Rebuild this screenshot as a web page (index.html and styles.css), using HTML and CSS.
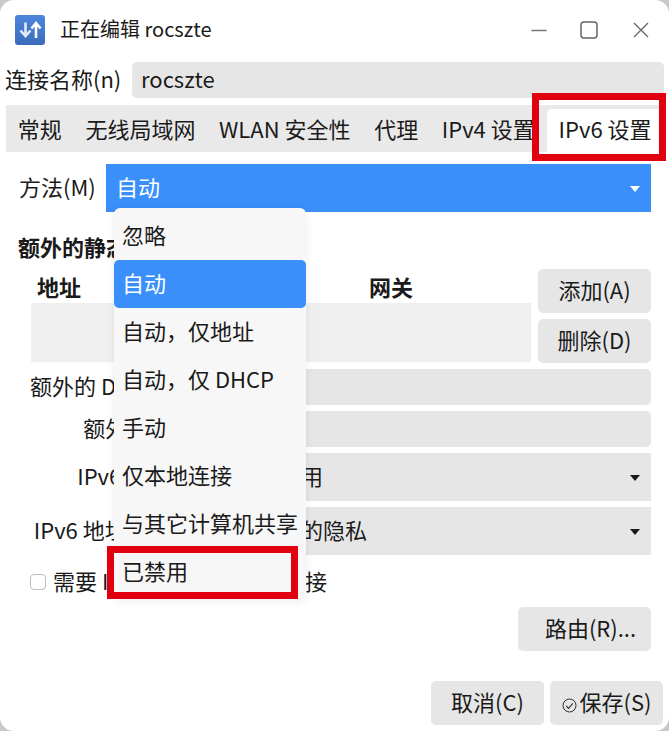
FILE: index.html
```html
<!DOCTYPE html>
<html lang="zh-CN">
<head>
<meta charset="utf-8">
<title>正在编辑 rocszte</title>
<link rel="stylesheet" href="styles.css">
</head>
<body>
<div class="window">
  <header class="titlebar">
    <svg class="app-icon" viewBox="0 0 30 30" width="30" height="30">
      <defs><linearGradient id="g" x1="0" y1="0" x2="0" y2="1"><stop offset="0" stop-color="#4c86dc"/><stop offset="1" stop-color="#3b6cbc"/></linearGradient></defs>
      <rect width="30" height="30" rx="3" fill="url(#g)"/>
      <path d="M10.5 7.5v13M5.5 15.5l5 5.5 5-5.5" fill="none" stroke="#e3ebf7" stroke-width="2.6"/>
      <path d="M21 23v-14M16.5 13.5L21 8l4.500 5.500" fill="none" stroke="#fff" stroke-width="2.6"/>
    </svg>
    <span class="title">正在编辑 rocszte</span>
    <div class="controls">
      <svg class="min-icon" width="16" height="16" viewBox="0 0 16 16"><path d="M0.500 8.500h15" stroke="#777" stroke-width="1.400"/></svg>
      <svg width="18" height="18" viewBox="0 0 18 18"><rect x="1" y="1" width="16" height="16" rx="3" fill="none" stroke="#666" stroke-width="1.500"/></svg>
      <svg width="16" height="16" viewBox="0 0 16 16"><path d="M1 1l14 14M15 1L1 15" stroke="#666" stroke-width="1.300" fill="none"/></svg>
    </div>
  </header>

  <div class="name-row">
    <label class="name-label">连接名称(n)</label>
    <div class="field name-field">rocszte</div>
  </div>

  <nav class="tabs">
    <span class="tab">常规</span>
    <span class="tab">无线局域网</span>
    <span class="tab">WLAN 安全性</span>
    <span class="tab">代理</span>
    <span class="tab">IPv4 设置</span>
    <span class="tab tab-active">IPv6 设置</span>
  </nav>

  <main class="panel">
    <div class="method-row">
      <label class="method-label">方法(M)</label>
      <div class="select select-active">自动<svg class="caret" width="10" height="6" viewBox="0 0 10 6"><path d="M0 0h10L5 6z" fill="#fff"/></svg></div>
    </div>

    <h2 class="section-title">额外的静态地址</h2>

    <div class="addresses">
      <div class="table">
        <div class="table-head"><b>地址</b><b>子网掩码</b><b>网关</b></div>
        <div class="table-body"></div>
      </div>
      <div class="side-buttons">
        <button class="btn">添加(A)</button>
        <button class="btn">删除(D)</button>
      </div>
    </div>

    <div class="form-row">
      <label class="form-label">额外的 DNS 服务器(V)</label>
      <div class="field grow"></div>
    </div>
    <div class="form-row">
      <label class="form-label">额外的搜索域(E)</label>
      <div class="field grow"></div>
    </div>
    <div class="form-row">
      <label class="form-label">IPv6 隐私扩展(P)</label>
      <div class="select grow">已禁用<svg class="caret" width="10" height="6" viewBox="0 0 10 6"><path d="M0 0h10L5 6z" fill="#1a1a1a"/></svg></div>
    </div>
    <div class="form-row">
      <label class="form-label">IPv6 地址生成模式(A)</label>
      <div class="select grow">稳定的隐私<svg class="caret" width="10" height="6" viewBox="0 0 10 6"><path d="M0 0h10L5 6z" fill="#1a1a1a"/></svg></div>
    </div>

    <label class="check-row"><span class="checkbox"></span><span class="check-text">需要 IPv6 地址完成这个连接</span></label>

    <div class="route-row"><button class="btn route-btn">路由(R)...</button></div>
  </main>

  <footer class="footer">
    <button class="btn">取消(C)</button>
    <button class="btn btn-save"><svg width="15" height="15" viewBox="0 0 15 15"><circle cx="7.500" cy="7.500" r="6.500" fill="none" stroke="#333" stroke-width="1"/><path d="M4.200 7.800l2.300 2.500 4.300-5" fill="none" stroke="#333" stroke-width="1.100"/></svg>保存(S)</button>
  </footer>

  <ul class="popup">
    <li class="item">忽略</li>
    <li class="item item-active">自动</li>
    <li class="item">自动，仅地址</li>
    <li class="item">自动，仅 DHCP</li>
    <li class="item">手动</li>
    <li class="item">仅本地连接</li>
    <li class="item">与其它计算机共享</li>
    <li class="item">已禁用</li>
  </ul>

  <div class="mark mark-tab"></div>
  <div class="mark mark-item"></div>
</div>
</body>
</html>
```
FILE: styles.css
```css
* { box-sizing: border-box; }
html, body { margin: 0; padding: 0; }
body {
  width: 669px;
  height: 731px;
  overflow: hidden;
  background: #c9c9c9;
  font-family: "Noto Sans CJK SC", "Noto Sans", sans-serif;
  font-size: 22px;
  line-height: 28px;
  color: #1a1a1a;
}
.window {
  position: relative;
  width: 669px;
  height: 731px;
  background: #fff;
  border-radius: 14px;
  overflow: hidden;
}
.titlebar {
  display: flex;
  align-items: center;
  height: 60px;
  padding: 0 20px 0 15px;
}
.app-icon { flex: none; }
.title { margin-left: 15px; padding-bottom: 2px; font-size: 20px; }
.controls {
  margin-left: auto;
  display: flex;
  align-items: center;
  gap: 35px;
}
.min-icon { margin-right: -2px; }
.name-row {
  display: flex;
  align-items: center;
  margin: 2px 5px 0 5px;
}
.name-label { width: 127px; flex: none; white-space: nowrap; padding-bottom: 4px; }
.field {
  height: 36px;
  line-height: 32px;
  background: #e6e6e6;
  border-radius: 5px;
  padding: 0 9px;
}
.name-field { flex: 1; }
.tabs {
  display: flex;
  align-items: flex-end;
  height: 47px;
  margin: 7px 8px 0 6px;
  background: #e9e9e9;
}
.tab {
  height: 43px;
  line-height: 39px;
  padding: 0 11.800px;
  white-space: nowrap;
}
.tab-active {
  flex: 1;
  background: #fff;
  border-radius: 5px 0 0 0;
  padding-left: 12px;
}
.panel { padding: 12px 18px 0; }
.method-row {
  display: flex;
  align-items: center;
}
.method-label { width: 88px; flex: none; white-space: nowrap; padding: 0 0 4px 1px; }
.select {
  position: relative;
  height: 48px;
  line-height: 44px;
  padding: 0 10px;
  background: #e6e6e6;
}
.select-active {
  flex: 1;
  background: #3a8ffa;
  color: #fff;
}
.caret {
  position: absolute;
  right: 11px;
  top: 22px;
}
.section-title {
  height: 28px;
  margin: 22px 0 0;
  font-size: 22px;
  line-height: 24px;
  font-weight: 700;
  white-space: nowrap;
}
.addresses {
  display: flex;
  gap: 7px;
  margin: 7px 0 0 13px;
}
.table { flex: 1; }
.table-head {
  display: grid;
  grid-template-columns: 166px 166px 1fr;
  height: 34px;
  padding: 3px 0 0 6px;
  line-height: 28px;
}
.table-body {
  height: 59px;
  background: #efefef;
}
.side-buttons {
  display: flex;
  flex-direction: column;
  gap: 6px;
  width: 113px;
}
.btn {
  height: 44px;
  width: 113px;
  padding: 0 0 4px;
  border: 0;
  border-radius: 5px;
  background: #e6e6e6;
  color: #1a1a1a;
  font: inherit;
  text-align: center;
  white-space: nowrap;
}
.form-row {
  display: flex;
  align-items: center;
  margin: 6px 0 0 12px;
}
.form-label {
  width: 213px;
  flex: none;
  margin-right: 4px;
  padding-bottom: 4px;
  text-align: right;
  white-space: nowrap;
}
.grow { flex: 1; }
.check-row {
  display: flex;
  align-items: center;
  margin: 13px 0 0 12px;
  height: 28px;
  white-space: nowrap;
}
.check-text { padding-bottom: 4px; }
.checkbox {
  width: 16px;
  height: 16px;
  margin-right: 7px;
  background: #fff;
  border: 1px solid #bdbdbd;
  border-radius: 4px;
}
.route-row {
  display: flex;
  justify-content: flex-end;
  margin-top: 11px;
}
.route-btn { width: 133px; padding-left: 12px; }
.footer {
  display: flex;
  justify-content: flex-end;
  gap: 6px;
  margin-top: 30px;
  padding-right: 6px;
}
.btn-save {
  display: flex;
  align-items: center;
  justify-content: center;
  gap: 3px;
}
.btn-save svg { margin-top: 8px; }
.popup {
  position: absolute;
  left: 114px;
  top: 208px;
  width: 192px;
  height: 392px;
  margin: 0;
  padding: 4px 0;
  list-style: none;
  background: #f7f7f7;
  border-radius: 6px;
  box-shadow: 0 1px 8px rgba(0, 0, 0, 0.08);
}
.item {
  height: 48px;
  line-height: 44px;
  padding: 0 8px;
  white-space: nowrap;
  border-radius: 5px;
}
.item-active {
  background: #3a8ffa;
  color: #fff;
}
.mark {
  position: absolute;
  border: 7px solid #e0000f;
  pointer-events: none;
}
.mark-tab { left: 532px; top: 93px; width: 134px; height: 68px; }
.mark-item { left: 107px; top: 546px; width: 191px; height: 53px; }
```
